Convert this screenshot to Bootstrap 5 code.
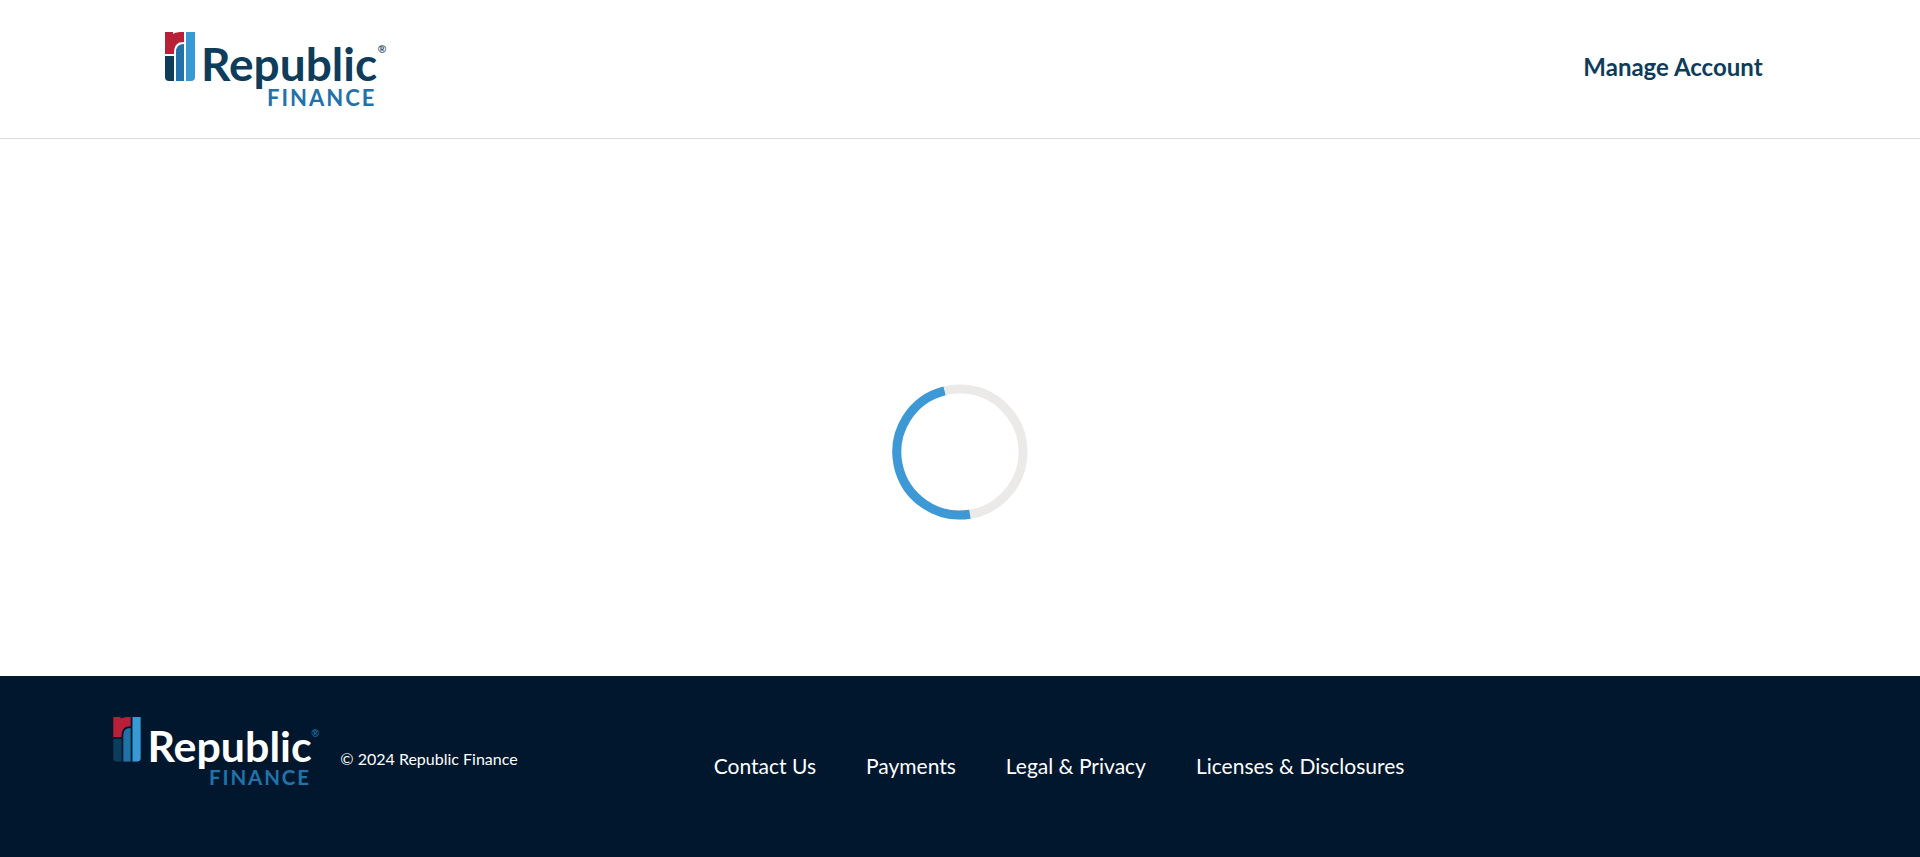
<!DOCTYPE html>
<html lang="en">
<head>
<meta charset="utf-8">
<meta name="viewport" content="width=device-width, initial-scale=1">
<title>Republic Finance</title>
<link href="https://cdn.jsdelivr.net/npm/bootstrap@5.3.0/dist/css/bootstrap.min.css" rel="stylesheet">
<style>
  body { font-family: Lato, "Open Sans", sans-serif; }
  .site-header { padding: 32px 8.2% 26px 8.6%; border-bottom: 1px solid #dcdcdc; }
  .logo { display: block; height: auto; }
  .logo-header { width: 222px; }
  .logo-footer { width: 207px; }
  .word-main { font-size: 46px; font-weight: 700; }
  .word-sub { font-size: 22px; font-weight: 700; letter-spacing: 2px; fill: #2272aa; }
  .word-reg { font-family: "Liberation Sans", sans-serif; font-size: 11px; font-weight: 700; }
  .account-link { color: #0e3d5b; font-size: 24px; font-weight: 700; line-height: 32px; }
  .account-nav { padding-bottom: 10px; }
  .loading-area { padding-top: 88px; }
  .site-footer { background: #00172e; padding: 41px 6% 65px 5.9%; }
  .copyright { font-size: 16px; line-height: 20px; }
  .footer-nav { padding-top: 22px; }
  .footer-links { gap: 16px 50px; }
  .footer-links a { font-size: 21px; line-height: 28px; }
  @media (min-width: 992px) { .brand-col { flex: 0 0 35.5%; } }
</style>
</head>
<body class="d-flex flex-column min-vh-100 bg-white">

<svg class="d-none" aria-hidden="true">
  <symbol id="mark" viewBox="0 0 30 49">
    <path fill="#b82037" d="M0 0H8V2C10 .5 13 0 19 0V10C12 10 9 13 9 22H0Z"/>
    <path fill="#0e3d5b" d="M0 24H9V49H4Q0 49 0 45Z"/>
    <path fill="#2272aa" d="M11 49V20Q11 12 19 12V49Z"/>
    <path fill="#379ad6" d="M21 0H30V45Q30 49 26 49H21Z"/>
  </symbol>
</svg>

<header class="site-header d-flex flex-wrap justify-content-between align-items-center">
  <a href="#" aria-label="Republic Finance home">
    <svg class="logo logo-header" viewBox="0 0 222 80">
      <use href="#mark" width="30" height="49"/>
      <text class="word-main" x="36" y="49" fill="#0e3d5b">Republic</text>
      <text class="word-sub" x="102" y="74">FINANCE</text>
      <text class="word-reg" x="213" y="21" fill="#0e3d5b">®</text>
    </svg>
  </a>
  <nav class="account-nav" aria-label="Account">
    <a class="account-link text-decoration-none" href="#">Manage Account</a>
  </nav>
</header>

<main class="loading-area flex-grow-1 d-flex justify-content-center align-items-center">
  <svg width="136" height="136" viewBox="-68 -68 136 136" fill="none" stroke-width="9" role="img" aria-label="Loading">
    <circle r="63" stroke="#ebeae9"/>
    <path stroke="#3c99d5" d="M-15.5 -61.1A63 63 0 0 0 9.9 62.2"/>
  </svg>
</main>

<footer class="site-footer text-white">
  <div class="row g-0">
    <div class="col-12 brand-col">
      <div class="d-flex align-items-center">
        <a href="#" aria-label="Republic Finance home">
          <svg class="logo logo-footer" viewBox="0 0 222 80">
            <use href="#mark" width="30" height="48"/>
            <text class="word-main" x="37" y="48" fill="#fff">Republic</text>
            <text class="word-sub" x="103" y="73">FINANCE</text>
            <text class="word-reg" x="213" y="21" fill="#2272aa">®</text>
          </svg>
        </a>
        <p class="copyright mb-0 mt-2 ms-3 ps-1">© 2024 Republic Finance</p>
      </div>
    </div>
    <nav class="footer-nav col d-flex align-items-center" aria-label="Footer">
      <ul class="footer-links list-unstyled d-flex flex-wrap mb-0">
        <li><a class="text-white text-decoration-none" href="#">Contact Us</a></li>
        <li><a class="text-white text-decoration-none" href="#">Payments</a></li>
        <li><a class="text-white text-decoration-none" href="#">Legal &amp; Privacy</a></li>
        <li><a class="text-white text-decoration-none" href="#">Licenses &amp; Disclosures</a></li>
      </ul>
    </nav>
  </div>
</footer>

<script src="https://cdn.jsdelivr.net/npm/bootstrap@5.3.0/dist/js/bootstrap.bundle.min.js"></script>
</body>
</html>
